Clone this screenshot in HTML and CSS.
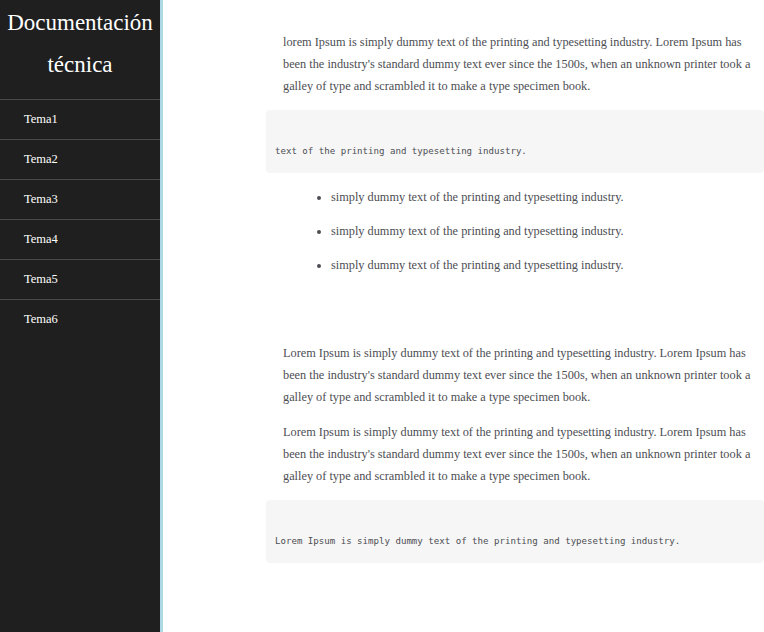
FILE: index.html
```html
<!DOCTYPE html>
<html lang="es">
<head>
<meta charset="utf-8">
<title>Documentación técnica</title>
<link rel="stylesheet" href="styles.css">
</head>
<body>
<div class="layout">
  <nav class="sidebar">
    <header class="sidebar-title">Documentación técnica</header>
    <a class="nav-link" href="#t1">Tema1</a>
    <a class="nav-link" href="#t2">Tema2</a>
    <a class="nav-link" href="#t3">Tema3</a>
    <a class="nav-link" href="#t4">Tema4</a>
    <a class="nav-link" href="#t5">Tema5</a>
    <a class="nav-link" href="#t6">Tema6</a>
  </nav>
  <main class="main">
    <section class="section" id="t1">
      <p class="text">lorem Ipsum is simply dummy text of the printing and typesetting industry. Lorem Ipsum has been the industry's standard dummy text ever since the 1500s, when an unknown printer took a galley of type and scrambled it to make a type specimen book.</p>
      <div class="code-block"><code class="code">text of the printing and typesetting industry.</code></div>
      <ul class="list">
        <li class="list-item">simply dummy text of the printing and typesetting industry.</li>
        <li class="list-item">simply dummy text of the printing and typesetting industry.</li>
        <li class="list-item">simply dummy text of the printing and typesetting industry.</li>
      </ul>
    </section>
    <section class="section second" id="t2">
      <p class="text">Lorem Ipsum is simply dummy text of the printing and typesetting industry. Lorem Ipsum has been the industry's standard dummy text ever since the 1500s, when an unknown printer took a galley of type and scrambled it to make a type specimen book.</p>
      <p class="text">Lorem Ipsum is simply dummy text of the printing and typesetting industry. Lorem Ipsum has been the industry's standard dummy text ever since the 1500s, when an unknown printer took a galley of type and scrambled it to make a type specimen book.</p>
      <div class="code-block"><code class="code">Lorem Ipsum is simply dummy text of the printing and typesetting industry.</code></div>
    </section>
  </main>
</div>
</body>
</html>
```
FILE: styles.css
```css
html, body {
  margin: 0;
  padding: 0;
  height: 100%;
}
body {
  font-family: "Liberation Serif", "Times New Roman", serif;
  background: #ffffff;
  overflow: hidden;
}
.layout {
  display: flex;
  height: 632px;
}
.sidebar {
  width: 160px;
  flex: 0 0 160px;
  background: #1f1f1f;
  border-right: 3px solid #add8e6;
  display: flex;
  flex-direction: column;
}
.sidebar-title {
  color: #ffffff;
  font-size: 23px;
  line-height: 42px;
  text-align: center;
  padding: 2px 0 13px;
}
.nav-link {
  display: block;
  color: #ffffff;
  text-decoration: none;
  font-size: 12.5px;
  height: 39px;
  line-height: 39px;
  padding-left: 24px;
  border-top: 1px solid #4a4a4a;
}
.main {
  flex: 1;
  padding: 31px 0 0 103px;
  color: #4d4e53;
}
.section.second {
  margin-top: 66px;
}
.text {
  margin: 0 12px 13px 17px;
  font-size: 12.3px;
  line-height: 22px;
}
.code-block {
  background: #f6f6f6;
  border-radius: 4px;
  padding: 34px 9px 15px;
  margin-bottom: 13px;
}
.code {
  font-family: "DejaVu Sans Mono", "Liberation Mono", monospace;
  font-size: 9.1px;
  line-height: 14px;
  color: #4d4e53;
  display: block;
}
.list {
  margin: 0;
  padding-left: 65px;
  font-size: 12.3px;
  line-height: 22px;
}
.list-item {
  margin-bottom: 12px;
}
```
